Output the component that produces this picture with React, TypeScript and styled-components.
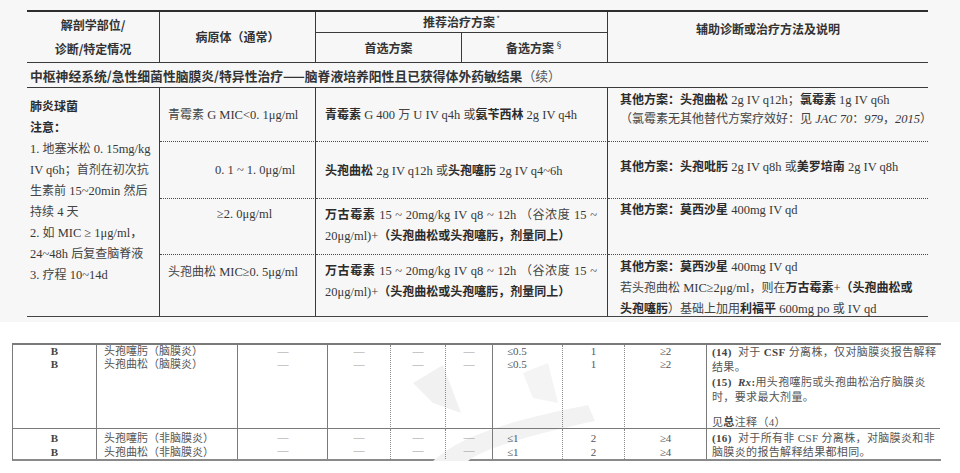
import React from "react";
import styled, { createGlobalStyle } from "styled-components";

const GlobalStyle = createGlobalStyle`
  html, body { margin: 0; padding: 0; background: #fff; }
  body {
    width: 960px; height: 473px; overflow: hidden;
    font-family: "Liberation Serif", "Noto Sans CJK SC", serif;
    color: #3a3a3a;
  }
`;

const Page = styled.div`
  width: 960px;
  height: 473px;
  display: flex;
  flex-direction: column;
  background: #fff;
`;

const Scan = styled.section`
  height: 322px;
  box-sizing: border-box;
  padding: 10px 0 0 27px;
  background: #f7f7f7;
`;

const TopGrid = styled.div`
  width: 901px;
  display: grid;
  grid-template-columns: 133px 156px 146px 146px 320px;
  grid-template-rows: 21px 29px 26px 54px 57px 56px 61px;
  border-top: 2px solid #2e2e2e;
  border-bottom: 1.5px solid #444;
  font-size: 12.5px;
`;

type Place = { $col: string; $row: string; $r?: boolean; $b?: "solid" | "dotted" };

const lineFor = (b?: "solid" | "dotted") =>
  b === "solid" ? "1.5px solid #3a3a3a" : b === "dotted" ? "1.5px dotted #4a4a4a" : "none";

const HeadCell = styled.div<Place & { $pb?: number }>`
  grid-column: ${(p) => p.$col};
  grid-row: ${(p) => p.$row};
  box-sizing: border-box;
  border-right: ${(p) => (p.$r ? "1.5px solid #3a3a3a" : "none")};
  border-bottom: ${(p) => lineFor(p.$b)};
  display: flex;
  flex-direction: column;
  align-items: center;
  justify-content: center;
  padding-bottom: ${(p) => p.$pb ?? 0}px;
  font-family: "Noto Sans CJK SC", sans-serif;
  font-size: 12px;
  font-weight: 700;
  color: #333;
  line-height: 24px;
  white-space: nowrap;
`;

const Sup = styled.sup`
  font-size: 8px;
  font-weight: 400;
  line-height: 0;
  margin-left: 1px;
`;

const SectionRow = styled.div`
  grid-column: 1 / 6;
  grid-row: 3;
  box-sizing: border-box;
  border-top: 1.5px solid #3a3a3a;
  border-bottom: 1.5px solid #3a3a3a;
  display: flex;
  align-items: center;
  padding-left: 3px;
  font-family: "Noto Sans CJK SC", sans-serif;
  font-size: 12.8px;
  font-weight: 700;
  color: #333;
  white-space: nowrap;
`;

const Light = styled.span`
  font-weight: 400;
  color: #555;
`;

const Cell = styled.div<Place & { $pt?: number; $pl?: number; $center?: boolean; $lh?: number }>`
  grid-column: ${(p) => p.$col};
  grid-row: ${(p) => p.$row};
  box-sizing: border-box;
  border-right: ${(p) => (p.$r ? "1.5px solid #3a3a3a" : "none")};
  border-bottom: ${(p) => lineFor(p.$b)};
  display: flex;
  flex-direction: column;
  justify-content: ${(p) => (p.$center ? "center" : "flex-start")};
  padding-top: ${(p) => p.$pt ?? 0}px;
  padding-left: ${(p) => p.$pl ?? 0}px;
  padding-right: 10px;
  line-height: ${(p) => p.$lh ?? 19}px;
  color: #383838;
`;

const Line = styled.span<{ $justify?: boolean }>`
  display: block;
  white-space: nowrap;
  text-align: ${(p) => (p.$justify ? "justify" : "left")};
  text-align-last: ${(p) => (p.$justify ? "justify" : "auto")};
`;

const S = styled.span`
  font-family: "Noto Sans CJK SC", sans-serif;
  font-size: 12px;
  font-weight: 700;
  color: #2b2b2b;
`;

const Song = styled.span`
  font-family: "Noto Sans CJK SC", sans-serif;
  font-size: 12px;
  font-weight: 400;
  color: #444;
`;

/* ---------- lower table ---------- */

const Lower = styled.div`
  position: relative;
  isolation: isolate;
  margin: 21px 0 0 12px;
  width: 928px;
  display: grid;
  grid-template-columns: 84px 141px 90px 63px 55px 47px 70px 62px 82px 233px;
  grid-template-rows: 84px 30px;
  border-top: 2px solid #7a7a7a;
  border-bottom: 2px solid #8a8a8a;
  border-left: 1.5px solid #7a7a7a;
  font-size: 11px;
  color: #555;
`;

const Watermark = styled.svg`
  position: absolute;
  left: 360px;
  top: -2px;
  width: 260px;
  height: 118px;
  z-index: -1;
  pointer-events: none;
`;

type LowerProps = {
  $edge?: "solid" | "dotted" | "none";
  $bottom?: boolean;
  $align?: "left" | "center";
  $pl?: number;
  $pt?: number;
  $lh?: number;
};

const LCell = styled.div<LowerProps>`
  box-sizing: border-box;
  border-right: ${(p) =>
    p.$edge === "solid" ? "1.5px solid #7a7a7a" : p.$edge === "dotted" ? "1.5px dotted #8a8a8a" : "none"};
  border-bottom: ${(p) => (p.$bottom ? "1.5px solid #7a7a7a" : "none")};
  display: flex;
  flex-direction: column;
  align-items: ${(p) => (p.$align === "left" ? "flex-start" : "center")};
  padding-left: ${(p) => p.$pl ?? 0}px;
  padding-top: ${(p) => p.$pt ?? 0}px;
  line-height: ${(p) => p.$lh ?? 13}px;
  white-space: nowrap;
  font-family: "Liberation Serif", "Noto Sans CJK SC", serif;
`;

const NoteText = styled.div`
  letter-spacing: 0.35px;
`;

const Dash = styled.span`
  display: block;
  color: #9a9a9a;
  font-size: 10px;
  line-height: 13px;
  transform: scaleX(1.1);
`;

const LB = styled.span`
  font-weight: 700;
  color: #444;
`;

const Gap = styled.span`
  display: block;
  height: 10px;
`;

type LowerRow = {
  grade: string[];
  names: string[];
  sens: string[];
  inter: string[];
  res: string[];
  note: React.ReactNode;
  bottom?: boolean;
  pt: number;
  lh: number;
};

const rows: LowerRow[] = [
  {
    grade: ["B", "B"],
    names: ["头孢噻肟（脑膜炎）", "头孢曲松（脑膜炎）"],
    sens: ["≤0.5", "≤0.5"],
    inter: ["1", "1"],
    res: ["≥2", "≥2"],
    bottom: true,
    pt: 0,
    lh: 13,
    note: (
      <NoteText>
        <Line>
          <LB>(14)</LB>&nbsp;&nbsp;对于 <LB>CSF</LB> 分离株，仅对脑膜炎报告解释
        </Line>
        <Line>结果。</Line>
        <Line>
          <LB>(15)</LB>&nbsp;&nbsp;
          <LB>
            <i>Rx</i>:
          </LB>
          用头孢噻肟或头孢曲松治疗脑膜炎
        </Line>
        <Line>时，要求最大剂量。</Line>
        <Gap />
        <Line>
          见<LB>总</LB>注释（4）
        </Line>
      </NoteText>
    ),
  },
  {
    grade: ["B", "B"],
    names: ["头孢噻肟（非脑膜炎）", "头孢曲松（非脑膜炎）"],
    sens: ["≤1", "≤1"],
    inter: ["2", "2"],
    res: ["≥4", "≥4"],
    pt: 2,
    lh: 14,
    note: (
      <NoteText>
        <Line>
          <LB>(16)</LB>&nbsp;&nbsp;对于所有非 CSF 分离株，对脑膜炎和非
        </Line>
        <Line>脑膜炎的报告解释结果都相同。</Line>
      </NoteText>
    ),
  },
];

export default function App() {
  return (
    <Page>
      <GlobalStyle />
      <Scan>
        <TopGrid>
          <HeadCell $col="1" $row="1 / 3" $r>
            <span>解剖学部位/</span>
            <span>诊断/特定情况</span>
          </HeadCell>
          <HeadCell $col="2" $row="1 / 3" $r>
            病原体（通常）
          </HeadCell>
          <HeadCell $col="3 / 5" $row="1" $r $b="solid">
            <span>
              推荐治疗方案<Sup>*</Sup>
            </span>
          </HeadCell>
          <HeadCell $col="3" $row="2" $r>
            首选方案
          </HeadCell>
          <HeadCell $col="4" $row="2" $r>
            <span>
              备选方案<Sup>§</Sup>
            </span>
          </HeadCell>
          <HeadCell $col="5" $row="1 / 3" $pb={16}>
            辅助诊断或治疗方法及说明
          </HeadCell>

          <SectionRow>
            中枢神经系统/急性细菌性脑膜炎/特异性治疗——脑脊液培养阳性且已获得体外药敏结果<Light>（续）</Light>
          </SectionRow>

          <Cell $col="1" $row="4 / 8" $r $pt={8} $pl={3} $lh={20}>
            <Line>
              <S>肺炎球菌</S>
            </Line>
            <Line>
              <S>注意：</S>
            </Line>
            <Line>
              1. <Song>地塞米松</Song> 0. 15mg/kg
            </Line>
            <Line>
              IV q6h<Song>；首剂在初次抗</Song>
            </Line>
            <Line>
              <Song>生素前</Song> 15~20min <Song>然后</Song>
            </Line>
            <Line>
              <Song>持续</Song> 4 <Song>天</Song>
            </Line>
            <Line>
              2. <Song>如</Song> MIC ≥ 1μg/ml，
            </Line>
            <Line>
              24~48h <Song>后复查脑脊液</Song>
            </Line>
            <Line>
              3. <Song>疗程</Song> 10~14d
            </Line>
          </Cell>

          <Cell $col="2" $row="4" $r $b="dotted" $center $pl={8}>
            <Line>
              <Song>青霉素</Song> G MIC&lt;0. 1μg/ml
            </Line>
          </Cell>
          <Cell $col="2" $row="5" $r $b="dotted" $center $pl={55}>
            <Line>0. 1 ~ 1. 0μg/ml</Line>
          </Cell>
          <Cell $col="2" $row="6" $r $b="dotted" $pt={6} $pl={57}>
            <Line>≥2. 0μg/ml</Line>
          </Cell>
          <Cell $col="2" $row="7" $r $pt={6} $pl={8}>
            <Line>
              <Song>头孢曲松</Song> MIC≥0. 5μg/ml
            </Line>
          </Cell>

          <Cell $col="3 / 5" $row="4" $r $b="dotted" $center $pl={9}>
            <Line>
              <S>青霉素</S> G 400 <Song>万</Song> U IV q4h <Song>或</Song>
              <S>氨苄西林</S> 2g IV q4h
            </Line>
          </Cell>
          <Cell $col="3 / 5" $row="5" $r $b="dotted" $center $pl={9}>
            <Line>
              <S>头孢曲松</S> 2g IV q12h <Song>或</Song>
              <S>头孢噻肟</S> 2g IV q4~6h
            </Line>
          </Cell>
          <Cell $col="3 / 5" $row="6" $r $b="dotted" $pt={5} $pl={9}>
            <Line $justify>
              <S>万古霉素</S> 15 ~ 20mg/kg IV q8 ~ 12h <Song>（谷浓度</Song> 15 ~
            </Line>
            <Line>
              20μg/ml)+<S>（头孢曲松或头孢噻肟，剂量同上）</S>
            </Line>
          </Cell>
          <Cell $col="3 / 5" $row="7" $r $pt={5} $pl={9}>
            <Line $justify>
              <S>万古霉素</S> 15 ~ 20mg/kg IV q8 ~ 12h <Song>（谷浓度</Song> 15 ~
            </Line>
            <Line>
              20μg/ml)+<S>（头孢曲松或头孢噻肟，剂量同上）</S>
            </Line>
          </Cell>

          <Cell $col="5" $row="4" $b="dotted" $pt={2} $pl={12} $lh={18}>
            <Line>
              <S>其他方案：头孢曲松</S> 2g IV q12h<Song>；</Song>
              <S>氯霉素</S> 1g IV q6h
            </Line>
            <Line>
              <Song>（氯霉素无其他替代方案疗效好：见</Song> <i>JAC 70</i>
              <Song>：</Song>
              <i>979</i>
              <Song>，</Song>
              <i>2015</i>
              <Song>）</Song>
            </Line>
          </Cell>
          <Cell $col="5" $row="5" $b="dotted" $pt={14} $pl={12}>
            <Line>
              <S>其他方案：头孢吡肟</S> 2g IV q8h <Song>或</Song>
              <S>美罗培南</S> 2g IV q8h
            </Line>
          </Cell>
          <Cell $col="5" $row="6" $b="dotted" $pt={0} $pl={12}>
            <Line>
              <S>其他方案：莫西沙星</S> 400mg IV qd
            </Line>
          </Cell>
          <Cell $col="5" $row="7" $pt={1} $pl={12} $lh={20}>
            <Line>
              <S>其他方案：莫西沙星</S> 400mg IV qd
            </Line>
            <Line>
              <Song>若头孢曲松</Song> MIC≥2μg/ml<Song>，则在</Song>
              <S>万古霉素</S>+<S>（头孢曲松或</S>
            </Line>
            <Line>
              <S>头孢噻肟</S>
              <Song>）基础上加用</Song>
              <S>利福平</S> 600mg po <Song>或</Song> IV qd
            </Line>
          </Cell>
        </TopGrid>
      </Scan>

      <Lower>
        <Watermark viewBox="0 0 260 118">
          <path d="M40 40 L70 22 L88 70 L60 60 Z" fill="#f1f1f1" />
          <path d="M60 118 C90 90 150 75 215 62 L222 78 C165 90 110 105 95 118 Z" fill="#f2f2f2" />
          <path d="M150 30 L175 20 L185 60 L160 55 Z" fill="#f4f4f4" />
        </Watermark>
        {rows.map((r, i) => (
          <React.Fragment key={i}>
            <LCell $edge="solid" $bottom={r.bottom} $pt={r.pt} $lh={r.lh}>
              {r.grade.map((g, k) => (
                <LB key={k}>{g}</LB>
              ))}
            </LCell>
            <LCell $edge="solid" $bottom={r.bottom} $align="left" $pl={7} $pt={r.pt} $lh={r.lh}>
              {r.names.map((n, k) => (
                <span key={k}>{n}</span>
              ))}
            </LCell>
            <LCell $edge="solid" $bottom={r.bottom} $pt={r.pt} $lh={r.lh}>
              <Dash>—</Dash>
              <Dash>—</Dash>
            </LCell>
            <LCell $edge="dotted" $bottom={r.bottom} $pt={r.pt} $lh={r.lh}>
              <Dash>—</Dash>
              <Dash>—</Dash>
            </LCell>
            <LCell $edge="dotted" $bottom={r.bottom} $pt={r.pt} $lh={r.lh}>
              <Dash>—</Dash>
              <Dash>—</Dash>
            </LCell>
            <LCell $edge="solid" $bottom={r.bottom} $pt={r.pt} $lh={r.lh}>
              <Dash>—</Dash>
              <Dash>—</Dash>
            </LCell>
            <LCell $edge="dotted" $bottom={r.bottom} $align="left" $pl={14} $pt={r.pt} $lh={r.lh}>
              {r.sens.map((s, k) => (
                <span key={k}>{s}</span>
              ))}
            </LCell>
            <LCell $edge="dotted" $bottom={r.bottom} $pt={r.pt} $lh={r.lh}>
              {r.inter.map((s, k) => (
                <span key={k}>{s}</span>
              ))}
            </LCell>
            <LCell $edge="solid" $bottom={r.bottom} $pt={r.pt} $lh={r.lh}>
              {r.res.map((s, k) => (
                <span key={k}>{s}</span>
              ))}
            </LCell>
            <LCell $edge="none" $bottom={r.bottom} $align="left" $pl={5} $pt={r.pt} $lh={r.bottom ? 15 : 14}>
              {r.note}
            </LCell>
          </React.Fragment>
        ))}
      </Lower>
    </Page>
  );
}
